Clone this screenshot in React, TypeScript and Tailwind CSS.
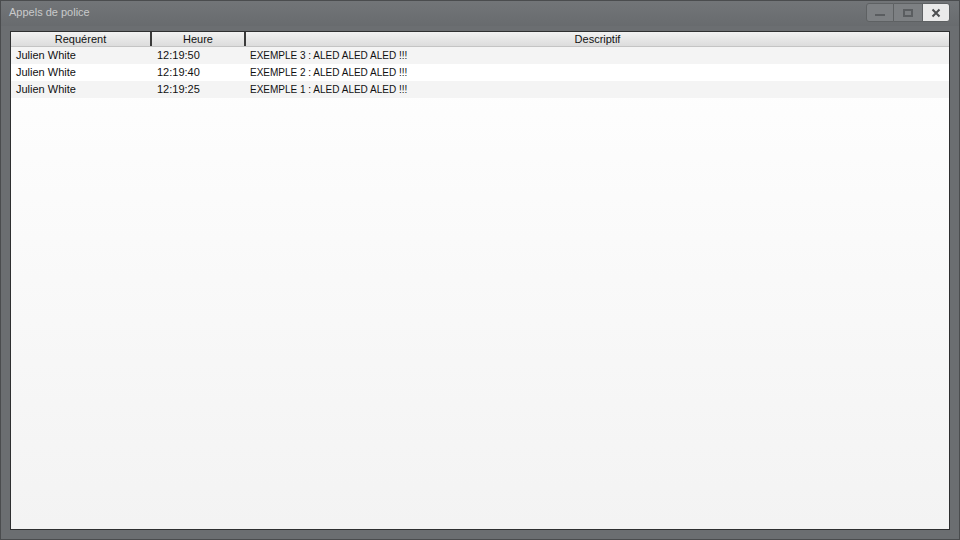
import React from 'react'

interface Call {
  name: string
  time: string
  desc: string
}

const calls: Call[] = [
  { name: 'Julien White', time: '12:19:50', desc: 'EXEMPLE 3 : ALED ALED ALED !!!' },
  { name: 'Julien White', time: '12:19:40', desc: 'EXEMPLE 2 : ALED ALED ALED !!!' },
  { name: 'Julien White', time: '12:19:25', desc: 'EXEMPLE 1 : ALED ALED ALED !!!' },
]

const App: React.FC = () => {
  return (
    <div
      className="w-[960px] h-[540px] bg-[#6b6e71] flex flex-col border border-[#4a4c4e] text-[11px]"
      style={{ fontFamily: '"Liberation Sans", Arial, sans-serif' }}
    >
      {/* title bar */}
      <div className="h-[25px] flex items-start justify-between pl-[8px] pr-[9px] bg-gradient-to-b from-[#727578] to-[#686b6e]">
        <span className="mt-[4px] text-[#c9cacb] leading-[14px]">Appels de police</span>
        <div className="flex mt-[2px] h-[19px]">
          <button className="w-[28px] h-full flex items-center justify-center bg-[#7d8083] border border-[#5e6163] rounded-l-[3px]">
            <span className="w-[10px] h-[2px] bg-[#5a5d60] mt-[4px]" />
          </button>
          <button className="w-[29px] h-full flex items-center justify-center bg-[#7d8083] border border-l-0 border-[#5e6163]">
            <span className="w-[10px] h-[8px] border-2 border-[#5a5d60]" />
          </button>
          <button className="w-[27px] h-full flex items-center justify-center bg-[#eaeaea] border border-l-0 border-[#5e6163] rounded-r-[3px]">
            <svg width="10" height="10" viewBox="0 0 10 10">
              <path d="M1.5 1.5 L8.5 8.5 M8.5 1.5 L1.5 8.5" stroke="#4c4e50" strokeWidth="2" />
            </svg>
          </button>
        </div>
      </div>

      {/* table panel */}
      <div className="flex-1 px-[9px] pt-[5px] pb-[9px] flex">
        <div className="flex-1 flex flex-col border border-[#2e2f30] bg-gradient-to-b from-white to-[#f3f3f3]">
          <div className="flex h-[15px] bg-gradient-to-b from-[#f2f2f2] to-[#dcdcdc] border-b border-[#c4c4c4] text-[#111]">
            <div className="w-[141px] text-center leading-[14px] border-r-2 border-[#3a3a3a]">Requérent</div>
            <div className="w-[94px] text-center leading-[14px] border-r-2 border-[#3a3a3a]">Heure</div>
            <div className="flex-1 text-center leading-[14px]">Descriptif</div>
          </div>
          {calls.map((c, i) => (
            <div
              key={i}
              className={`flex h-[17px] items-center text-[#111] ${i % 2 === 0 ? 'bg-[#f4f4f4]' : 'bg-white'}`}
            >
              <div className="w-[141px] pl-[5px]">{c.name}</div>
              <div className="w-[93px] pl-[5px]">{c.time}</div>
              <div className="flex-1 pl-[5px] text-[10px]">{c.desc}</div>
            </div>
          ))}
        </div>
      </div>
    </div>
  )
}

export default App
